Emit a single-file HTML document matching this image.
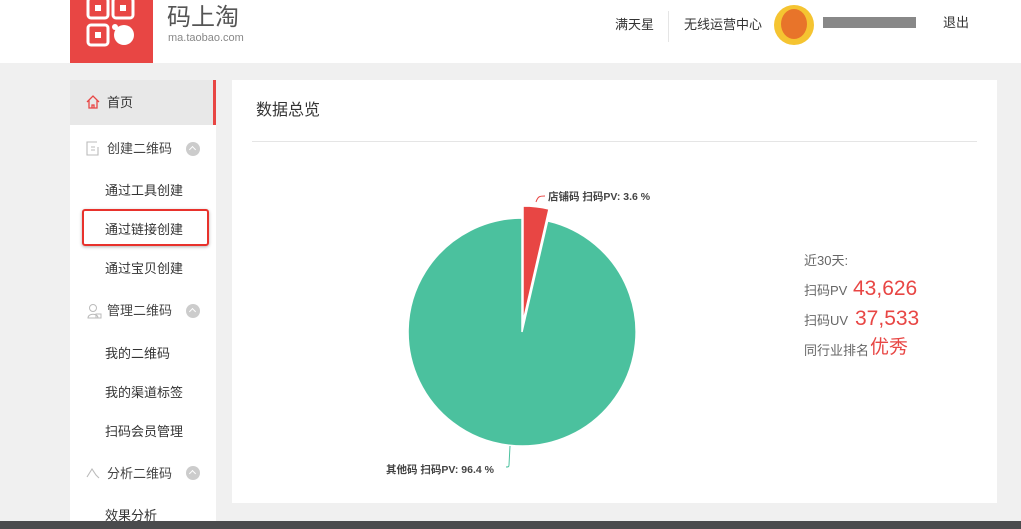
<!DOCTYPE html>
<html><head><meta charset="utf-8"><style>
*{margin:0;padding:0;box-sizing:border-box}
body{width:1021px;height:529px;overflow:hidden;background:#f0f0f0;font-family:"Liberation Sans","Noto Sans CJK SC",sans-serif;position:relative;color:#333}
.a{position:absolute;white-space:nowrap;line-height:1.2}
.hdr{left:0;top:0;width:1021px;height:63px;background:#fff}
.sb{left:70px;top:80px;width:146px;height:441px;background:#fff}
.it{font-size:13px;color:#333}
.grp{font-size:13px;color:#444}
.chev{width:14px;height:14px;border-radius:50%;background:#ccc}
.chev:after{content:"";position:absolute;left:4px;top:5px;width:4px;height:4px;border-left:1.6px solid #fff;border-top:1.6px solid #fff;transform:rotate(45deg)}
</style></head><body>
<div class="a hdr"></div>
<div class="a" style="left:70px;top:0;width:83px;height:63px;background:#e84644"></div>
<svg class="a" style="left:70px;top:0" width="83" height="63">
<g fill="none" stroke="#fff" stroke-width="3">
<rect x="18" y="-2" width="20" height="20" rx="3"/><rect x="43" y="-2" width="20" height="20" rx="3"/><rect x="18" y="25" width="20" height="20" rx="3"/></g>
<g fill="#fff"><rect x="25" y="5" width="6" height="6"/><rect x="50" y="5" width="6" height="6"/><rect x="25" y="32" width="6" height="6"/>
<circle cx="54" cy="35" r="10"/><circle cx="45" cy="27" r="3"/></g></svg>
<div class="a" style="left:167px;top:4px;font-size:24px;color:#555">码上淘</div>
<div class="a" style="left:168px;top:32px;font-size:11px;color:#888">ma.taobao.com</div>
<div class="a" style="left:615px;top:17px;font-size:13px;color:#333">满天星</div>
<div class="a" style="left:668px;top:11px;width:1px;height:31px;background:#e5e5e5"></div>
<div class="a" style="left:684px;top:17px;font-size:13px;color:#333">无线运营中心</div>
<div class="a" style="left:774px;top:5px;width:40px;height:40px;border-radius:50%;background:#f5c431"></div>
<div class="a" style="left:781px;top:9px;width:26px;height:30px;border-radius:50%;background:#e8742a"></div>
<div class="a" style="left:823px;top:17px;width:93px;height:11px;background:#888"></div>
<div class="a" style="left:943px;top:15px;font-size:13px;color:#333">退出</div>

<div class="a sb"></div>
<div class="a" style="left:70px;top:80px;width:146px;height:45px;background:#e8e8e8"></div>
<div class="a" style="left:213px;top:80px;width:3px;height:45px;background:#e84644"></div>
<svg class="a" style="left:85px;top:94px" width="16" height="16"><path d="M2 8 L8 2 L14 8 M4 6.5 V14 H12 V6.5 M7 14 V11 H9 V14" fill="none" stroke="#e84644" stroke-width="1.3"/></svg>
<div class="a it" style="left:107px;top:95px">首页</div>
<svg class="a" style="left:86px;top:141px" width="14" height="15"><path d="M11 1 H1 V14 H12 V6 M5 6 H9 M5 9 H9" fill="none" stroke="#bbb" stroke-width="1.1"/></svg>
<div class="a grp" style="left:107px;top:141px">创建二维码</div>
<div class="a chev" style="left:186px;top:142px"></div>
<div class="a it" style="left:105px;top:183px">通过工具创建</div>
<div class="a" style="left:82px;top:209px;width:127px;height:37px;border:2px solid #e8322c;border-radius:3px;box-shadow:0 1px 3px rgba(0,0,0,.3)"></div>
<div class="a it" style="left:105px;top:222px">通过链接创建</div>
<div class="a it" style="left:105px;top:261px">通过宝贝创建</div>
<svg class="a" style="left:86px;top:303px" width="16" height="16"><circle cx="7" cy="5" r="3.5" fill="none" stroke="#bbb"/><path d="M2 15 C2 10 12 10 12 15 Z M10 11 H15 V15 H10Z" fill="none" stroke="#bbb"/></svg>
<div class="a grp" style="left:107px;top:303px">管理二维码</div>
<div class="a chev" style="left:186px;top:304px"></div>
<div class="a it" style="left:105px;top:346px">我的二维码</div>
<div class="a it" style="left:105px;top:385px">我的渠道标签</div>
<div class="a it" style="left:105px;top:424px">扫码会员管理</div>
<svg class="a" style="left:86px;top:466px" width="16" height="14"><path d="M1 11 L6 3 L10 9 L13 12" fill="none" stroke="#bbb" stroke-width="1.1"/></svg>
<div class="a grp" style="left:107px;top:466px">分析二维码</div>
<div class="a chev" style="left:186px;top:466px"></div>
<div class="a it" style="left:105px;top:508px">效果分析</div>

<div class="a" style="left:232px;top:80px;width:765px;height:423px;background:#fff"></div>
<div class="a" style="left:256px;top:101px;font-size:16px;color:#333">数据总览</div>
<div class="a" style="left:252px;top:141px;width:725px;height:1px;background:#e5e5e5"></div>
<svg class="a" style="left:0;top:0" width="1021" height="529">
<path d="M522,332 L547.6,220.9 A114,114 0 1 1 522,218 Z" fill="#4bc19e" stroke="#fff" stroke-width="1.5"/>
<path d="M523,322 L523,206 A114,114 0 0 1 549,209 Z" fill="#e84644" stroke="#fff" stroke-width="1.5"/>
<path d="M536,202 C538,196 540,196 545,196" fill="none" stroke="#e84644"/>
<path d="M510,446 L509,465 C509,467 508,467 506,467" fill="none" stroke="#4bc19e"/>
<text x="548" y="200" font-size="10.5" font-weight="bold" fill="#444" font-family="Liberation Sans,Noto Sans CJK SC,sans-serif">店铺码 扫码PV: 3.6 %</text>
<text x="386" y="473" font-size="10.5" font-weight="bold" fill="#444" font-family="Liberation Sans,Noto Sans CJK SC,sans-serif">其他码 扫码PV: 96.4 %</text>
</svg>
<div class="a" style="left:804px;top:253px;font-size:13px;color:#666">近30天:</div>
<div class="a" style="left:804px;top:283px;font-size:13px;color:#666">扫码PV</div>
<div class="a" style="left:853px;top:276px;font-size:21px;color:#e84644">43,626</div>
<div class="a" style="left:804px;top:313px;font-size:13px;color:#666">扫码UV</div>
<div class="a" style="left:855px;top:306px;font-size:21px;color:#e84644">37,533</div>
<div class="a" style="left:804px;top:343px;font-size:13px;color:#666">同行业排名</div>
<div class="a" style="left:870px;top:337px;font-size:19px;color:#e84644">优秀</div>
<div class="a" style="left:0;top:521px;width:1021px;height:8px;background:#4a4b4d"></div>
</body></html>
